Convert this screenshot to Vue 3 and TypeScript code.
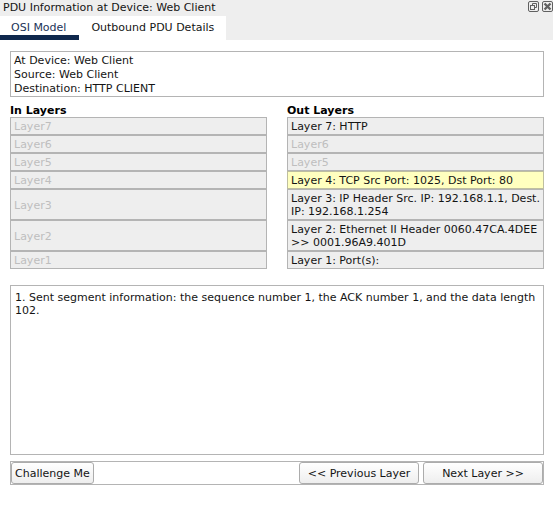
<script setup lang="ts">
import { ref } from 'vue'

interface LayerRow {
  inbound: string
  outbound: string
  active: boolean
  selected?: boolean
}

const tabs = ['OSI Model', 'Outbound PDU Details']
const activeTab = ref(0)

const details = ['At Device: Web Client', 'Source: Web Client', 'Destination: HTTP CLIENT']

const layers: LayerRow[] = [
  { inbound: 'Layer7', outbound: 'Layer 7: HTTP', active: true },
  { inbound: 'Layer6', outbound: 'Layer6', active: false },
  { inbound: 'Layer5', outbound: 'Layer5', active: false },
  { inbound: 'Layer4', outbound: 'Layer 4: TCP Src Port: 1025, Dst Port: 80', active: true, selected: true },
  { inbound: 'Layer3', outbound: 'Layer 3: IP Header Src. IP: 192.168.1.1, Dest. IP: 192.168.1.254', active: true },
  { inbound: 'Layer2', outbound: 'Layer 2: Ethernet II Header 0060.47CA.4DEE >> 0001.96A9.401D', active: true },
  { inbound: 'Layer1', outbound: 'Layer 1: Port(s):', active: true },
]
</script>

<template>
  <div class="window">
    <header class="titlebar">
      <h1 class="title">PDU Information at Device: Web Client</h1>
      <div class="controls">
        <button class="control" type="button" aria-label="Float">
          <svg width="11" height="11" viewBox="0 0 11 11" fill="none" stroke="#606060">
            <rect x="0.5" y="0.5" width="10" height="10" rx="1.5" />
            <path d="M4.5 4V2.5H8.5V6.5H7" />
            <rect x="2.5" y="4.5" width="4" height="4" />
          </svg>
        </button>
        <button class="control" type="button" aria-label="Close">
          <svg width="11" height="11" viewBox="0 0 11 11" fill="none" stroke="#606060">
            <rect x="0.5" y="0.5" width="10" height="10" rx="1.5" />
            <path d="M2.5 2.5L8.5 8.5M8.5 2.5L2.5 8.5" stroke-width="2.4" />
          </svg>
        </button>
      </div>
    </header>

    <nav class="tabs" role="tablist">
      <button
        v-for="(tab, i) in tabs"
        :key="tab"
        class="tab"
        :class="{ current: i === activeTab }"
        type="button"
        role="tab"
        :aria-selected="i === activeTab"
        @click="activeTab = i"
      >{{ tab }}</button>
    </nav>

    <main class="panel">
      <section class="summary">
        <p v-for="line in details" :key="line">{{ line }}</p>
      </section>

      <section class="layers">
        <h2>In Layers</h2>
        <h2>Out Layers</h2>
        <template v-for="layer in layers" :key="layer.inbound">
          <div class="layer disabled">{{ layer.inbound }}</div>
          <div class="layer" :class="{ disabled: !layer.active, selected: layer.selected }">{{ layer.outbound }}</div>
        </template>
      </section>

      <section class="description">
        <p>1. Sent segment information: the sequence number 1, the ACK number 1, and the data length 102.</p>
      </section>

      <footer class="actions">
        <button class="button challenge" type="button">Challenge Me</button>
        <button class="button step" type="button">&lt;&lt; Previous Layer</button>
        <button class="button step" type="button">Next Layer &gt;&gt;</button>
      </footer>
    </main>
  </div>
</template>

<style>
body {
  margin: 0;
  background: #fff;
}
</style>

<style scoped>
.window {
  display: flex;
  flex-direction: column;
  min-height: 100vh;
  box-sizing: border-box;
  background: #fff;
  color: #141414;
  font: 11px/13px "DejaVu Sans", Verdana, sans-serif;
}

.window * {
  box-sizing: border-box;
}

h1,
h2,
p {
  margin: 0;
  font-size: inherit;
}

button {
  margin: 0;
  padding: 0;
  border: 0;
  color: inherit;
  font: inherit;
}

.titlebar {
  display: flex;
  justify-content: space-between;
  height: 16px;
  padding: 1px 0 0 3px;
  background: #eee;
}

.title {
  font-weight: normal;
}

.controls {
  display: flex;
  gap: 3px;
}

.control {
  width: 11px;
  height: 11px;
  background: none;
}

.control svg {
  display: block;
}

.tabs {
  display: flex;
  height: 24px;
  background: #eee;
}

.tab {
  padding: 5px 12px 1px;
  border-bottom: 5px solid #fff;
  background: #fff;
}

.tab.current {
  padding: 5px 13px 1px 11px;
  border-color: #0f284d;
  color: #1b3358;
}

.panel {
  display: flex;
  flex: 1;
  flex-direction: column;
  padding: 11px 9px 21px 10px;
}

.summary {
  padding: 2px 3px 0;
  border: 1px solid #b4b4b4;
  line-height: 14px;
}

.layers {
  display: grid;
  grid-template-columns: 1fr 1fr;
  column-gap: 20px;
  margin: 7px 0 16px;
}

.layers h2 {
  color: #000;
}

.layer {
  display: flex;
  align-items: center;
  padding: 2px 3px 1px;
  border: 1px solid #b4b4b4;
  background: #eee;
}

.layer.disabled {
  color: #bebebe;
}

.layer.selected {
  border-color: #bebea0;
  background: #ffffbf;
}

.description {
  flex: 1;
  padding: 5px 4px;
  border: 1px solid #b4b4b4;
}

.actions {
  display: flex;
  gap: 4px;
  margin-top: 6px;
  border: 1px solid #b4b4b4;
}

.button {
  height: 22px;
  border: 1px solid #acacac;
  border-radius: 3px;
  background: linear-gradient(#fff, #eee);
}

.challenge {
  margin-right: auto;
  padding: 0 3px;
}

.step {
  width: 120px;
}
</style>
